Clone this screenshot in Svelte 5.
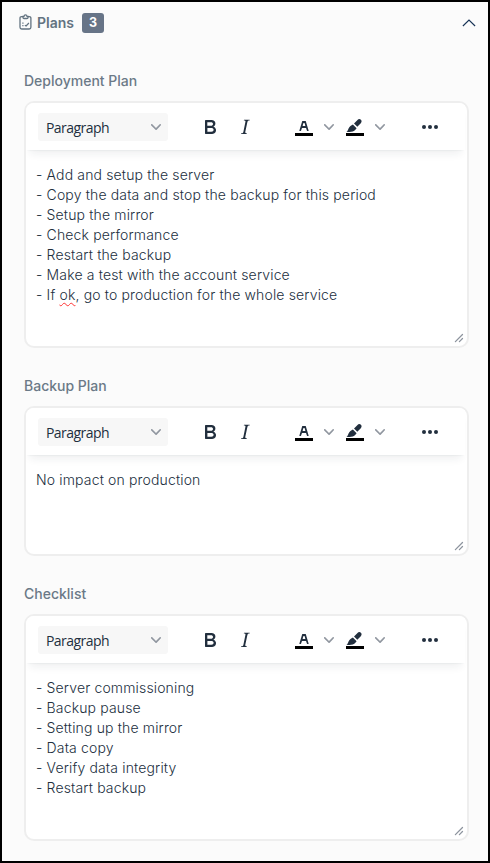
<script>
  const plans = [
    {
      title: 'Deployment Plan',
      height: 247,
      lines: [
        '- Add and setup the server',
        '- Copy the data and stop the backup for this period',
        '- Setup the mirror',
        '- Check performance',
        '- Restart the backup',
        '- Make a test with the account service',
        ['- If ', 'ok', ', go to production for the whole service']
      ]
    },
    { title: 'Backup Plan', height: 150, lines: ['No impact on production'] },
    {
      title: 'Checklist',
      height: 227,
      lines: [
        '- Server commissioning',
        '- Backup pause',
        '- Setting up the mirror',
        '- Data copy',
        '- Verify data integrity',
        '- Restart backup'
      ]
    }
  ];
</script>

{#snippet chevron()}
  <svg class="chevron" width="10" height="10" viewBox="0 0 10 10"><path d="M8.7 2.2c.3-.3.8-.3 1 0 .4.4.4.9 0 1.2L5.7 7.8c-.3.3-.9.3-1.2 0L.2 3.4a.8.8 0 0 1 0-1.2c.3-.3.8-.3 1.1 0L5 6l3.7-3.8z" /></svg>
{/snippet}

<div class="panel">
  <header>
    <svg class="clip" width="14" height="16" viewBox="0 0 14 16" fill="none" stroke="#637381" stroke-width="1.3">
      <path d="M4 2.6H2.6C1.5 2.6 1 3.2 1 4.2v9c0 1.1.6 1.8 1.6 1.8h7.600c1.100 0 1.700-.7 1.700-1.800v-9c0-1-.6-1.600-1.600-1.600H9" />
      <path d="M4 2.300h1c.2-2 2.800-2 3 0h1v1.200c0 .7-.4 1-1 1H5c-.6 0-1-.3-1-1z" />
      <path d="M3.300 9.200h1.200M3.300 11.700h1.200M5.800 11.300l1.300 .7 2.800-3" stroke-width="1.2" />
    </svg>
    <span class="name">Plans</span>
    <span class="badge">3</span>
    <svg class="collapse" width="14" height="8" viewBox="0 0 14 8" fill="none" stroke="#173356" stroke-width="1.15"><path d="M.9 7 7 1l6.1 6" /></svg>
  </header>

  {#each plans as plan}
    <section>
      <h2>{plan.title}</h2>
      <div class="editor" style:height="{plan.height}px">
        <div class="toolbar">
          <div class="select"><span>Paragraph</span>{@render chevron()}</div>
          <svg class="icon bold" width="24" height="24" viewBox="0 0 24 24"><path fill-rule="evenodd" d="M7.8 19c-.3 0-.5 0-.6-.2l-.2-.5V5.7c0-.2 0-.4.2-.5l.6-.2h5c1.5 0 2.7.3 3.5 1 .7.6 1.1 1.4 1.1 2.5a3 3 0 0 1-.6 1.9c-.4.6-1 1-1.6 1.2.4.1.9.3 1.3.6s.8.7 1 1.2c.4.4.5 1 .5 1.6 0 1.3-.4 2.3-1.3 3-.8.7-2.1 1-3.8 1H7.8zm5-8.3c.6 0 1.2-.1 1.6-.5.4-.3.6-.7.6-1.3 0-1.1-.8-1.7-2.3-1.7H9.3v3.5h3.4zm.5 6c.7 0 1.3-.1 1.7-.4.4-.4.6-.9.6-1.5s-.2-1-.7-1.4c-.4-.3-1-.4-2-.4H9.4v3.8h4z" /></svg>
          <svg class="icon italic" width="24" height="24" viewBox="0 0 24 24"><path d="M16.7 4.7l-.1.9h-.3c-.6 0-1 0-1.4.3-.3.3-.4.6-.5 1.1l-2.1 9.8v.6c0 .5.4.8 1.4.8h.2l-.2.8H8l.2-.8h.2c1.1 0 1.8-.5 2-1.5l2-9.8.1-.5c0-.6-.4-.8-1.4-.8h-.3l.2-.9h5.8z" /></svg>
          <svg class="icon color" width="24" height="24" viewBox="0 0 24 24"><path fill="#000" d="M3 18h18v3H3z" /><path fill-rule="evenodd" d="M8.7 16h-.8a.5.5 0 0 1-.5-.6l2.7-9c.1-.3.3-.4.5-.4h2.8c.2 0 .4.1.5.4l2.7 9a.5.5 0 0 1-.5.6h-.8a.5.5 0 0 1-.4-.4l-.7-2.2c0-.3-.3-.4-.5-.4h-3.4c-.2 0-.4.1-.5.4l-.7 2.2c0 .3-.2.4-.4.4zm2.6-7.6l-.6 2a.5.5 0 0 0 .5.6h1.6a.5.5 0 0 0 .5-.6l-.6-2c0-.3-.3-.4-.5-.4h-.4c-.2 0-.4.1-.5.4z" /></svg>
          {@render chevron()}
          <svg class="icon marker" width="24" height="24" viewBox="0 0 24 24"><path fill="#000" d="M3 18h18v3H3z" /><path d="M3.500 16.700c1.500-.8 1.600-2.300 2.300-3.700.8-1.500 2.300-2.600 4.100-3.600l3.700 3.900c-1 1.600-2.200 2.700-3.900 3.200-2 .6-4 .5-6.200.2zM11 8.400l3.500-3.500c1-1 2.400-1.100 3.400-.1s.9 2.400-.1 3.400l-3.500 3.600z" /></svg>
          {@render chevron()}
          <svg class="icon more" width="24" height="24" viewBox="0 0 24 24"><circle cx="6" cy="12" r="2" /><circle cx="12" cy="12" r="2" /><circle cx="18" cy="12" r="2" /></svg>
        </div>
        <div class="content">
          {#each plan.lines as line}
            <p>{#if Array.isArray(line)}{line[0]}<span class="typo">{line[1]}</span>{line[2]}{:else}{line}{/if}</p>
          {/each}
        </div>
        <svg class="grip" width="10" height="10" viewBox="0 0 10 10"><path d="M1.400 8.600 8.500 1.500M5.400 8.600 8.500 5.500" /></svg>
      </div>
    </section>
  {/each}
</div>

<style>
  .panel {
    box-sizing: border-box;
    width: 490px;
    height: 863px;
    border: 2px solid #000;
    background: #fbfbfb;
    padding: 0 19px 0 22px;
    font-family: Inter, "Liberation Sans", sans-serif;
    overflow: hidden;
  }
  header {
    display: flex;
    align-items: center;
    height: 42px;
    margin: 0 -9px 26px -6px;
    color: #637381;
  }
  .clip { margin: -3px 5px 0 1px; }
  .name { font-size: 14px; font-weight: 600; line-height: 20px; margin-left: -1px; }
  .badge {
    width: 22px;
    height: 20px;
    margin-left: 8px;
    border-radius: 3px;
    background: #677487;
    color: #fff;
    font-size: 12.5px;
    font-weight: 700;
    line-height: 19px;
    text-align: center;
  }
  .collapse { margin-left: auto; margin-right: 2px; }
  section { margin-bottom: 27px; }
  h2 {
    margin: 0 0 9px;
    height: 22px;
    line-height: 22px;
    font-size: 14px;
    font-weight: 500;
    color: #6b7987;
  }
  .editor {
    box-sizing: border-box;
    width: 445px;
    border: 2px solid #eee;
    border-radius: 10px;
    background: #fff;
    display: flex;
    flex-direction: column;
    overflow: hidden;
  }
  .toolbar {
    flex: none;
    display: flex;
    align-items: center;
    height: 47px;
    padding: 0 0 0 12px;
    margin-right: 2px;
    box-shadow: 0 2px 2px -2px rgba(34, 47, 62, 0.1), 0 8px 8px -4px rgba(34, 47, 62, 0.07);
    background: #fff;
  }
  .select {
    box-sizing: border-box;
    display: flex;
    align-items: center;
    justify-content: space-between;
    width: 130px;
    height: 28px;
    padding: 0 7px 0 8px;
    margin-top: 1px;
    border-radius: 3px;
    background: #f7f7f7;
    color: #222f3e;
    font: 14px/28px "Open Sans", "Noto Sans", sans-serif;
    letter-spacing: -0.55px;
  }
  .select span { padding-top: 2px; }
  .icon { fill: #222f3e; margin-top: 1px; }
  .bold { margin-left: 30px; }
  .italic { margin-left: 11px; }
  .color { margin-left: 35px; margin-right: 8px; }
  .marker { margin-left: 9px; margin-right: 8px; }
  .more { margin-left: 33px; }
  .chevron { fill: #9197a0; }
  .content { flex: 1; padding: 15px 10px 0; }
  p {
    margin: 0;
    font-size: 14px;
    font-weight: 300;
    letter-spacing: 0.15px;
    line-height: 20px;
    color: #222f3e;
    white-space: nowrap;
  }
  .typo { text-decoration: underline wavy #f33 1px; text-underline-offset: 2px; text-decoration-skip-ink: none; }
  .grip { align-self: flex-end; margin: 0 3px 3px 0; stroke: #8d949e; stroke-width: 1.3; stroke-linecap: round; }
</style>
